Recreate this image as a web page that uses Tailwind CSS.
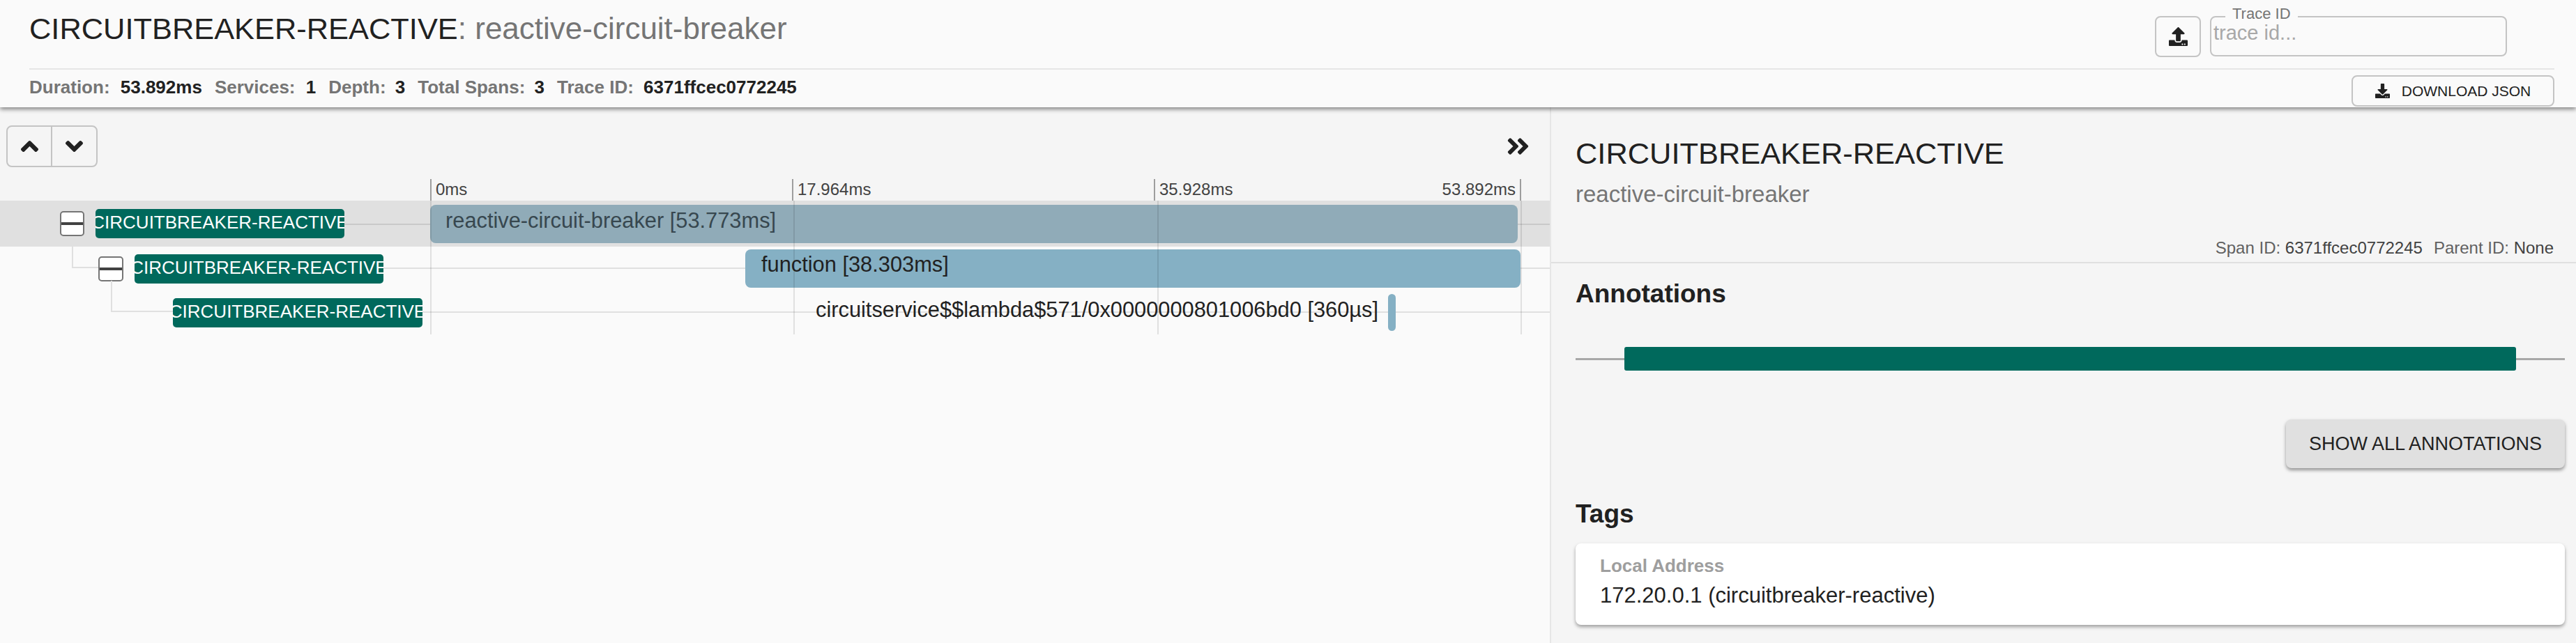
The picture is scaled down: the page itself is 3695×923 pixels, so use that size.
<!DOCTYPE html>
<html lang="en">
<head>
    <meta charset="UTF-8">
    <title>Trace</title>
    <script src="https://cdn.jsdelivr.net/npm/@tailwindcss/browser@4"></script>
</head>
<body class="font-['Liberation_Sans',sans-serif] bg-[#fafafa] text-[#212121] h-[923px] overflow-hidden flex flex-col">

    <!-- header -->
    <header class="relative z-10 h-[154px] shrink-0 bg-[#fafafa] pl-[42px] pr-[31px] shadow-[0_3px_6px_rgba(0,0,0,0.45)]">
        <div class="h-[100px] border-b-2 border-[#e6e6e6] flex justify-between">
            <h1 class="text-[43.4px] leading-[50px] pt-[16px]">CIRCUITBREAKER-REACTIVE<span class="text-[#757575] text-[44px]">: reactive-circuit-breaker</span></h1>
            <div class="flex gap-[13px] pt-[23px] pr-[68px]">
                <button class="w-[66px] h-[59px] border-2 border-[#c4c4c4] rounded-[8px] flex items-center justify-center">
                    <svg class="w-[27px] h-[27px]" viewBox="0 0 512 512" fill="#212121"><path d="M296 384h-80c-13.3 0-24-10.7-24-24V192h-87.7c-17.8 0-26.7-21.5-14.1-34.1L242.3 5.7c7.5-7.5 19.8-7.5 27.3 0l152.2 152.2c12.6 12.6 3.7 34.1-14.1 34.1H320v168c0 13.3-10.7 24-24 24zm216-8v112c0 13.3-10.7 24-24 24H24c-13.3 0-24-10.7-24-24V376c0-13.3 10.7-24 24-24h136v8c0 30.9 25.1 56 56 56h80c30.9 0 56-25.1 56-56v-8h136c13.3 0 24 10.7 24 24zm-124 88c0-11-9-20-20-20s-20 9-20 20 9 20 20 20 20-9 20-20zm64 0c0-11-9-20-20-20s-20 9-20 20 9 20 20 20 20-9 20-20z"/></svg>
                </button>
                <div class="relative w-[426px] h-[58px] border-2 border-[#c4c4c4] rounded-[8px] pl-[3px] text-[29px] leading-[44px] text-[#a8a8a8]">
                    trace id...
                    <span class="absolute left-[20px] -top-[17px] bg-[#fafafa] px-[10px] text-[22px] leading-[24px] text-[#757575]">Trace ID</span>
                </div>
            </div>
        </div>
        <div class="relative flex justify-between">
            <div class="flex gap-[18px] pt-[11px] text-[26px] leading-[28px] font-bold text-[#757575]">
                <span>Duration: <span class="text-[#212121] ml-[8px]">53.892ms</span></span>
                <span>Services: <span class="text-[#212121] ml-[8px]">1</span></span>
                <span>Depth: <span class="text-[#212121] ml-[6px]">3</span></span>
                <span>Total Spans: <span class="text-[#212121] ml-[6px]">3</span></span>
                <span>Trace ID: <span class="text-[#212121] ml-[7px]">6371ffcec0772245</span></span>
            </div>
            <button class="mt-[8px] w-[291px] h-[45px] border-2 border-[#c4c4c4] rounded-[8px] flex items-center justify-center gap-[17px] text-[21px] bg-[#fafafa]">
                <svg class="w-[21px] h-[21px]" viewBox="0 0 512 512" fill="#212121"><path d="M216 0h80c13.3 0 24 10.7 24 24v168h87.7c17.8 0 26.7 21.5 14.1 34.1L269.7 378.3c-7.5 7.5-19.8 7.5-27.3 0L90.1 226.1c-12.6-12.6-3.7-34.1 14.1-34.1H192V24c0-13.3 10.7-24 24-24zm296 376v112c0 13.3-10.7 24-24 24H24c-13.3 0-24-10.7-24-24V376c0-13.3 10.7-24 24-24h146.7l49 49c20.1 20.1 52.5 20.1 72.6 0l49-49H488c13.3 0 24 10.7 24 24zm-124 88c0-11-9-20-20-20s-20 9-20 20 9 20 20 20 20-9 20-20zm64 0c0-11-9-20-20-20s-20 9-20 20 9 20 20 20 20-9 20-20z"/></svg>
                DOWNLOAD JSON
            </button>
        </div>
    </header>

    <main class="flex flex-1 min-h-0">

        <!-- timeline -->
        <section class="w-[2225px] shrink-0 border-r-2 border-[#e6e6e6]">
            <div class="bg-[#f5f5f5] h-[103px]">
                <div class="flex justify-between pl-[9px] pr-[29px]">
                    <div class="mt-[26px] flex h-[60px] w-[131px] border-2 border-[#c4c4c4] rounded-[8px]">
                        <button class="w-[64px] border-r-2 border-[#c4c4c4] flex items-center justify-center">
                            <svg class="w-[25px] h-[40px]" viewBox="0 0 320 512" fill="#212121"><path d="M177 159.7l136 136c9.4 9.4 9.4 24.6 0 33.9l-22.6 22.6c-9.4 9.4-24.6 9.4-33.9 0L160 255.9l-96.4 96.4c-9.4 9.4-24.6 9.4-33.9 0L7 329.7c-9.4-9.4-9.4-24.6 0-33.9l136-136c9.4-9.5 24.6-9.5 34-.1z"/></svg>
                        </button>
                        <button class="flex-1 flex items-center justify-center">
                            <svg class="w-[25px] h-[40px]" viewBox="0 0 320 512" fill="#212121"><path d="M143 352.3L7 216.3c-9.4-9.4-9.4-24.6 0-33.9l22.6-22.6c9.4-9.4 24.6-9.4 33.9 0l96.4 96.4 96.4-96.4c9.4-9.4 24.6-9.4 33.9 0l22.6 22.6c9.4 9.4 9.4 24.6 0 33.9l-136 136c-9.2 9.4-24.4 9.4-33.8 0z"/></svg>
                        </button>
                    </div>
                    <svg class="mt-[37px] w-[33px] h-[38px]" viewBox="0 0 448 512" fill="#212121"><path d="M224.3 273l-136 136c-9.4 9.4-24.6 9.4-33.9 0l-22.6-22.6c-9.4-9.4-9.4-24.6 0-33.9l96.4-96.4-96.4-96.4c-9.4-9.4-9.4-24.6 0-33.9L54.3 103c9.4-9.4 24.6-9.4 33.9 0l136 136c9.5 9.4 9.5 24.6.1 34zm192-34l-136-136c-9.4-9.4-24.6-9.4-33.9 0l-22.6 22.6c-9.4 9.4-9.4 24.6 0 33.9l96.4 96.4-96.4 96.4c-9.4 9.4-9.4 24.6 0 33.9l22.6 22.6c9.4 9.4 24.6 9.4 33.9 0l136-136c9.4-9.2 9.4-24.4 0-33.8z"/></svg>
                </div>
            </div>

            <!-- ruler -->
            <div class="bg-[#f5f5f5] h-[31px] pl-[617px] pr-[41px] flex text-[24px] leading-[30px] text-[#424242]">
                <div class="flex-1 border-l-2 border-[#9e9e9e] pl-[6px]">0ms</div>
                <div class="flex-1 border-l-2 border-[#9e9e9e] pl-[6px]">17.964ms</div>
                <div class="flex-1 border-x-2 border-[#9e9e9e] pl-[6px] pr-[6px] flex justify-between"><span>35.928ms</span><span>53.892ms</span></div>
            </div>

            <!-- spans -->
            <div class="relative">
                <div class="h-[66px] bg-[#e0e0e0] flex items-center relative">
                    <div class="absolute left-[494px] right-0 top-[33px] h-[2px] bg-black/10"></div>
                    <div class="relative w-[617px] shrink-0 flex items-center pl-[86px] gap-[16px]">
                        <span class="w-[35px] h-[36px] bg-white border-2 border-[#757575] rounded-[5px] flex items-center"><i class="block w-full h-[4px] bg-[#424242]"></i></span>
                        <span class="w-[357px] h-[42px] bg-[#00695c] text-white rounded-[5px] overflow-hidden whitespace-nowrap flex justify-center text-[26px] leading-[38px]">CIRCUITBREAKER-REACTIVE</span>
                    </div>
                    <div class="relative w-[1560px] h-[55px] bg-[#90abb8] rounded-[8px] pl-[22px] pt-[2px] text-[30.8px] leading-[42px] text-[#37474f]">reactive-circuit-breaker [53.773ms]</div>
                </div>

                <div class="h-[63px] flex items-center relative">
                    <div class="absolute left-[103px] -top-[14px] h-[45px] w-[38px] border-l-2 border-b-2 border-[#e0e0e0]"></div>
                    <div class="absolute left-[550px] right-0 top-[30px] h-[2px] bg-[#e0e0e0]"></div>
                    <div class="relative w-[617px] shrink-0 flex items-center pl-[141px] gap-[16px]">
                        <span class="w-[36px] h-[36px] bg-white border-2 border-[#757575] rounded-[5px] flex items-center"><i class="block w-full h-[4px] bg-[#424242]"></i></span>
                        <span class="w-[357px] h-[42px] bg-[#00695c] text-white rounded-[5px] overflow-hidden whitespace-nowrap flex justify-center text-[26px] leading-[38px]">CIRCUITBREAKER-REACTIVE</span>
                    </div>
                    <div class="relative ml-[452px] w-[1112px] h-[55px] bg-[#85b0c4] rounded-[8px] pl-[23px] pt-[1px] text-[30.8px] leading-[42px]">function [38.303ms]</div>
                </div>

                <div class="h-[63px] flex items-center relative">
                    <div class="absolute left-[159px] -top-[14px] h-[45px] w-[89px] border-l-2 border-b-2 border-[#e0e0e0]"></div>
                    <div class="absolute left-[606px] right-0 top-[30px] h-[2px] bg-[#e0e0e0]"></div>
                    <div class="relative w-[617px] shrink-0 pl-[248px]">
                        <span class="w-[358px] h-[42px] bg-[#00695c] text-white rounded-[5px] overflow-hidden whitespace-nowrap flex justify-center text-[26px] leading-[38px]">CIRCUITBREAKER-REACTIVE</span>
                    </div>
                    <div class="relative ml-[553px] w-[807px] pb-[8px] text-[30.8px] leading-[42px] whitespace-nowrap">circuitservice$$lambda$571/0x0000000801006bd0 [360µs]</div>
                    <div class="relative ml-[14px] w-[11px] h-[53px] bg-[#85b0c4] rounded-full"></div>
                </div>

                <!-- grid lines over the spans -->
                <div class="absolute inset-y-0 left-[617px] w-[1566px] flex pointer-events-none">
                    <div class="flex-1 border-l-2 border-black/10"></div>
                    <div class="flex-1 border-l-2 border-black/10"></div>
                    <div class="flex-1 border-x-2 border-black/10"></div>
                </div>
            </div>
        </section>

        <!-- span detail -->
        <section class="flex-1 bg-[#f5f5f5] min-w-0">
            <div class="h-[224px] border-b-2 border-[#e0e0e0] pl-[35px] pr-[32px]">
                <h2 class="pt-[41px] text-[43.4px] leading-[50px]">CIRCUITBREAKER-REACTIVE</h2>
                <p class="mt-[14px] text-[33px] leading-[40px] text-[#757575]">reactive-circuit-breaker</p>
                <div class="mt-[43px] flex justify-end gap-[16px] text-[24px] leading-[28px] text-[#616161]">
                    <span>Span ID: <span class="text-[#424242]">6371ffcec0772245</span></span>
                    <span>Parent ID: <span class="text-[#424242]">None</span></span>
                </div>
            </div>
            <div class="pl-[35px] pr-[16px]">
                <h3 class="pt-[21px] text-[37px] leading-[46px] font-bold">Annotations</h3>
                <div class="mt-[53px] h-[34px] relative flex items-center">
                    <div class="absolute inset-x-0 h-[3px] bg-[#a8a8a8]"></div>
                    <div class="relative ml-[70px] w-[1279px] h-[34px] bg-[#00695c] rounded-[3px]"></div>
                </div>
                <div class="flex justify-end mt-[70px]">
                    <button class="w-[400px] h-[70px] bg-[#e0e0e0] rounded-[8px] text-[27px] shadow-[0_3px_5px_rgba(0,0,0,0.4)]">SHOW ALL ANNOTATIONS</button>
                </div>
                <h3 class="pt-[43px] text-[37px] leading-[46px] font-bold">Tags</h3>
                <div class="mt-[19px] h-[117px] bg-white rounded-[8px] px-[35px] pt-[17px] shadow-[0_3px_5px_rgba(0,0,0,0.35)]">
                    <div class="text-[26px] leading-[30px] font-bold text-[#9e9e9e]">Local Address</div>
                    <div class="mt-[8px] text-[31px] leading-[40px]">172.20.0.1 (circuitbreaker-reactive)</div>
                </div>
            </div>
        </section>
    </main>
</body>
</html>
